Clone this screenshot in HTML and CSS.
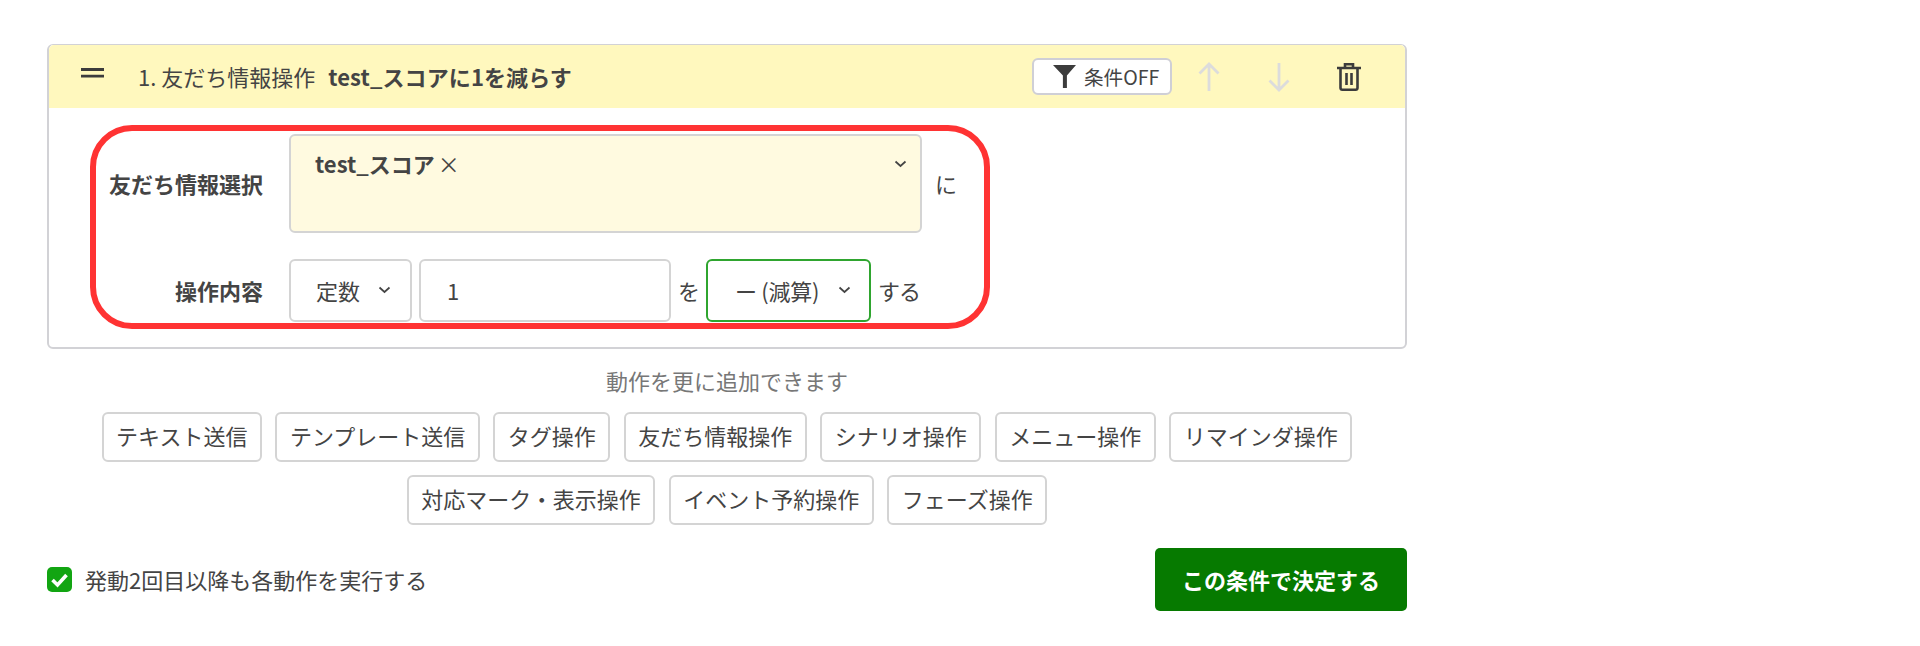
FILE: index.html
```html
<!DOCTYPE html>
<html lang="ja">
<head>
<meta charset="utf-8">
<title>友だち情報操作</title>
<link rel="stylesheet" href="styles.css">
</head>
<body>
<div class="panel">
  <section class="card">
    <header class="card-head">
      <svg class="handle" width="23" height="10" viewBox="0 0 23 10"><path d="M0 1.500h23M0 8.200h23" stroke="#3c3c3c" stroke-width="2.800"/></svg>
      <div class="card-title"><span>1. 友だち情報操作</span><b>test_スコアに1を減らす</b></div>
      <button class="cond-btn">
        <svg width="23" height="23" viewBox="0 0 23 23"><path d="M0 0h23l-9.100 10.500V23h-4V10.500z" fill="#3c3c3c"/></svg>
        <span>条件OFF</span>
      </button>
      <svg class="move" width="22" height="30" viewBox="0 0 22 30"><path d="M11 29V2M1.500 11.500 11 2l9.500 9.500" fill="none" stroke="#dcdcdc" stroke-width="2.800"/></svg>
      <svg class="move" width="22" height="30" viewBox="0 0 22 30"><path d="M11 1v27M1.500 18.500 11 28l9.500-9.500" fill="none" stroke="#dcdcdc" stroke-width="2.800"/></svg>
      <svg class="trash" width="24" height="28" viewBox="0 0 24 28"><path d="M0 5h24M8 4V1.300h8V4M3.500 5v20a1.800 1.800 0 0 0 1.800 1.700h13.400a1.800 1.800 0 0 0 1.800-1.700V5M9.500 10v12M14.500 10v12" fill="none" stroke="#3c3c3c" stroke-width="2.600"/></svg>
    </header>
    <div class="card-body">
      <div class="highlight">
        <div class="row row-top">
          <label class="row-label">友だち情報選択</label>
          <div class="multi">
            <span class="multi-tag">test_スコア<i>×</i></span>
            <svg class="chev" width="13" height="8" viewBox="0 0 13 8"><path d="M1.500 1.500 6.500 6l5-4.500" fill="none" stroke="#444" stroke-width="1.700"/></svg>
          </div>
          <span class="word">に</span>
        </div>
        <div class="row">
          <label class="row-label">操作内容</label>
          <div class="select select-type">定数
            <svg class="chev" width="13" height="8" viewBox="0 0 13 8"><path d="M1.500 1.500 6.500 6l5-4.500" fill="none" stroke="#444" stroke-width="1.700"/></svg>
          </div>
          <div class="input">1</div>
          <span class="word">を</span>
          <div class="select select-op">ー (減算)
            <svg class="chev" width="13" height="8" viewBox="0 0 13 8"><path d="M1.500 1.500 6.500 6l5-4.500" fill="none" stroke="#444" stroke-width="1.700"/></svg>
          </div>
          <span class="word">する</span>
        </div>
      </div>
    </div>
  </section>
  <p class="hint">動作を更に追加できます</p>
  <div class="actions">
    <button class="act">テキスト送信</button>
    <button class="act">テンプレート送信</button>
    <button class="act">タグ操作</button>
    <button class="act">友だち情報操作</button>
    <button class="act">シナリオ操作</button>
    <button class="act">メニュー操作</button>
    <button class="act">リマインダ操作</button>
    <button class="act">対応マーク・表示操作</button>
    <button class="act">イベント予約操作</button>
    <button class="act">フェーズ操作</button>
  </div>
  <footer class="foot">
    <label class="check">
      <svg width="25" height="25" viewBox="0 0 25 25"><rect width="25" height="25" rx="5" fill="#12a512"/><path d="M5.500 13l5 5 9-10" fill="none" stroke="#fff" stroke-width="3.600"/></svg>
      <span>発動2回目以降も各動作を実行する</span>
    </label>
    <button class="submit">この条件で決定する</button>
  </footer>
</div>
</body>
</html>
```
FILE: styles.css
```css
* { box-sizing: border-box; }
html, body { margin: 0; padding: 0; background: #fff; }
body {
  height: 646px;
  overflow: hidden;
  font-family: "Noto Sans CJK JP", "Noto Sans", sans-serif;
  color: #444;
  font-size: 22px;
}
button { font: inherit; color: inherit; background: #fff; margin: 0; }
.panel { width: 1360px; margin-left: 47px; padding-top: 44px; }
.card {
  height: 305px;
  border: 2px solid #d2d2d6;
  border-top-width: 1px;
  border-radius: 6px;
  background: #fff;
}
.card-head {
  height: 63px;
  background: #fff8be;
  display: flex;
  align-items: center;
  padding: 0 44px 0 32px;
  border-radius: 5px 5px 0 0;
}
.handle { margin-top: -8px; flex: none; }
.card-title { margin-left: 34px; flex: 1; display: flex; gap: 13px; line-height: 30px; padding-bottom: 2px; }
.card-title b { font-weight: 700; letter-spacing: 0.1px; }
.cond-btn {
  width: 140px;
  height: 37px;
  border: 2px solid #cfcfd6;
  border-radius: 6px;
  display: flex;
  align-items: center;
  padding: 0 0 0 19px;
  gap: 8px;
  font-size: 19.600px;
  flex: none;
}
.cond-btn span { line-height: 26px; }
.move { margin-left: 26px; flex: none; }
.move + .move { margin-left: 48px; }
.trash { margin-left: 47px; flex: none; }
.card-body { padding: 17px 0 0 41px; }
.highlight {
  width: 900px;
  height: 204px;
  border: 6px solid #ff3333;
  border-radius: 42px;
  padding: 3px 0 0 0;
}
.row { display: flex; align-items: center; gap: 7px; height: 63px; }
.row-top { height: 99px; margin-bottom: 26px; }
.row-label {
  width: 167px;
  margin-right: 19px;
  text-align: right;
  font-weight: 700;
  line-height: 30px;
  padding-bottom: 2px;
  flex: none;
}
.multi {
  width: 633px;
  height: 99px;
  background: #fffae0;
  border: 2px solid #d4d4d4;
  border-radius: 6px;
  padding: 0 24px;
  display: flex;
  align-items: flex-start;
  justify-content: space-between;
}
.multi-tag { font-weight: 700; line-height: 30px; margin-top: 12px; }
.multi-tag i { font-style: normal; font-weight: 400; margin-left: 3px; }
.multi .chev { margin: 24px -11px 0 0; }
.row-top .word { margin-left: 6px; }
.word { letter-spacing: -1px; line-height: 30px; padding-bottom: 2px; flex: none; }
.select, .input {
  height: 63px;
  border: 2px solid #d4d4d4;
  border-radius: 6px;
  display: flex;
  align-items: center;
  line-height: 30px;
  padding-bottom: 2px;
  flex: none;
  background: #fff;
}
.select { justify-content: space-between; }
.select-type { width: 123px; padding-left: 25px; padding-right: 19px; }
.input { width: 252px; padding-left: 26px; }
.select-op { width: 165px; border-color: #2fa52f; padding-left: 27px; padding-right: 18px; letter-spacing: -0.3px; }
.chev { flex: none; }
.hint { margin: 16px 0 0; text-align: center; color: #777; line-height: 30px; }
.actions {
  margin: 17px auto 0;
  width: 1280px;
  display: flex;
  flex-wrap: wrap;
  justify-content: center;
  gap: 13px 13.500px;
}
.act {
  height: 50px;
  padding: 0 12.500px 4px;
  border: 2px solid #d4d4d4;
  border-radius: 6px;
  line-height: 30px;
  white-space: nowrap;
}
.foot { display: flex; justify-content: space-between; align-items: center; margin-top: 23px; }
.check { display: flex; align-items: center; gap: 13px; line-height: 30px; }
.check span { padding-bottom: 2px; }
.check svg { flex: none; }
.submit {
  width: 252px;
  height: 63px;
  padding: 0 0 2px;
  border: 0;
  border-radius: 5px;
  background: #067a00;
  color: #fff;
  font-weight: 700;
}
```
